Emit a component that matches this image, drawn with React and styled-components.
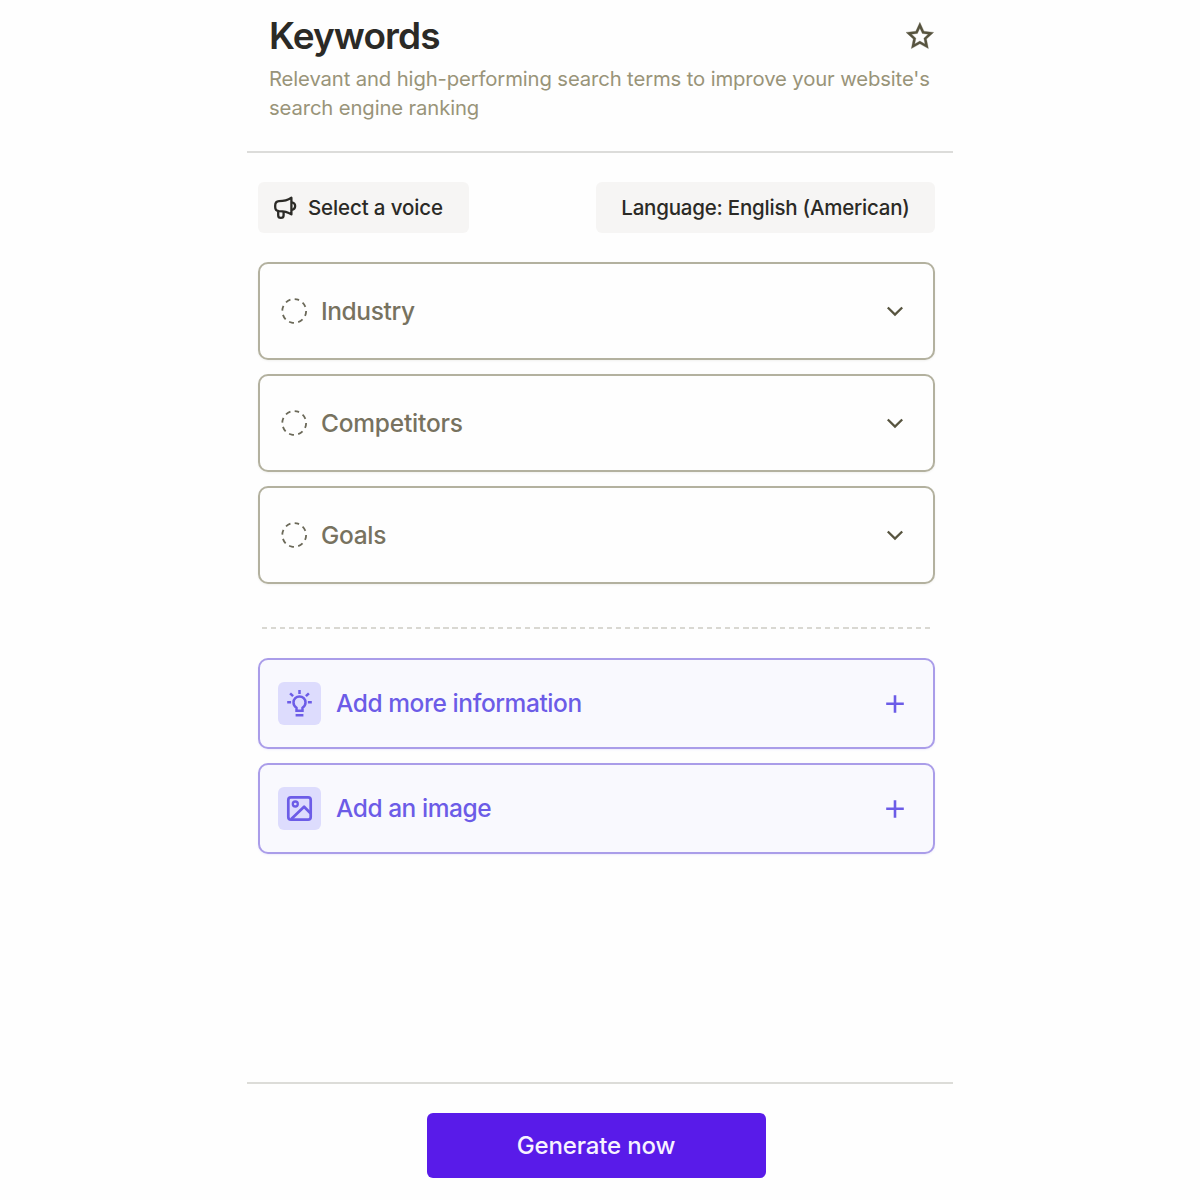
import React from "react";
import styled, { createGlobalStyle } from "styled-components";

const GlobalStyle = createGlobalStyle`
  *, *::before, *::after { box-sizing: border-box; }
  body { margin: 0; background: #fefefe; }
  button { font: inherit; border: 0; padding: 0; background: none; cursor: pointer; }
  svg { display: block; flex: none; }
`;

const Page = styled.div`
  height: 1200px;
  padding-left: 247px;
  font-family: Inter, "Liberation Sans", sans-serif;
`;

const Panel = styled.main`
  width: 706px;
  height: 100%;
  display: flex;
  flex-direction: column;
`;

const Header = styled.header`
  height: 153px;
  padding: 14px 19px 0 22px;
  border-bottom: 2px solid #dcdcda;
`;

const TitleRow = styled.div`
  display: flex;
  justify-content: space-between;
  align-items: center;
  height: 44px;
`;

const Title = styled.h1`
  margin: 0;
  font-size: 37px;
  line-height: 44px;
  font-weight: 600;
  letter-spacing: -0.9px;
  color: #2b2a26;
`;

const StarButton = styled.button`
  color: #57543f;
`;

const Description = styled.p`
  margin: 6px 0 0;
  font-size: 20.3px;
  line-height: 29px;
  letter-spacing: -0.13px;
  white-space: nowrap;
  color: #999479;
`;

const Body = styled.section`
  flex: 1;
  padding: 29px 18px 0 11px;
`;

const Toolbar = styled.div`
  display: flex;
  justify-content: space-between;
  margin-bottom: 29px;
`;

const OptionButton = styled.button`
  display: flex;
  align-items: center;
  justify-content: ${(p) => (p.$centered ? "center" : "flex-start")};
  gap: 9px;
  width: ${(p) => p.$width}px;
  height: 51px;
  padding-left: ${(p) => (p.$centered ? 0 : 15)}px;
  border-radius: 6px;
  background: #f6f5f4;
  color: #2b2a26;
  font-size: 20.5px;
  font-weight: 500;
  letter-spacing: ${(p) => p.$tracking}px;
  white-space: nowrap;
`;

const Stack = styled.div`
  display: flex;
  flex-direction: column;
  gap: ${(p) => p.$gap}px;
`;

const Card = styled.button`
  display: flex;
  align-items: center;
  width: 677px;
  border: 2px solid;
  border-radius: 10px;
  font-size: 24.5px;
  font-weight: 500;
`;

const FieldCard = styled(Card)`
  height: 98px;
  gap: 13px;
  padding: 0 26px 1px 20px;
  border-color: #b3b19f;
  background: #fefefe;
  color: #77725f;
  box-shadow: 0 1px 2px rgba(90, 86, 60, 0.08);
`;

const AddCard = styled(Card)`
  height: 91px;
  gap: 15px;
  padding: 0 26px 0 18px;
  border-color: #aa9de9;
  background: #f9f9fe;
  color: #6c5ce7;
  box-shadow: 0 1px 2px rgba(108, 92, 231, 0.1);
`;

const Label = styled.span`
  flex: 1;
  padding-bottom: ${(p) => p.$lift || 0}px;
  text-align: left;
  letter-spacing: ${(p) => p.$tracking}px;
  white-space: nowrap;
`;

const IconTile = styled.span`
  display: grid;
  place-items: center;
  width: 43px;
  height: 43px;
  border-radius: 6px;
  background: #dddcfd;
`;

const DashedRule = styled.div`
  height: 2px;
  margin: 43px 4px 29px 3px;
  background: repeating-linear-gradient(to right, transparent 0 0.5px, #d9d8d2 0.5px 5.8px, transparent 5.8px 9.09px);
`;

const Footer = styled.footer`
  display: flex;
  justify-content: center;
  height: 118px;
  padding: 29px 8px 0 0;
  border-top: 2px solid #dcdcd8;
`;

const GenerateButton = styled.button`
  width: 339px;
  height: 65px;
  border-radius: 6px;
  background: #591be9;
  color: #f7f2ff;
  font-size: 24px;
  font-weight: 500;
  letter-spacing: -0.13px;
`;

const StarIcon = () => (
  <svg width="29" height="29" viewBox="-0.3 0.2 24 24" fill="currentColor" stroke="currentColor" strokeWidth="0.25">
    <path d="M12 18.26 4.95 22.21 6.52 14.28.59 8.79 8.61 7.84 12 .5l3.39 7.34 8.02.95-5.93 5.49 1.57 7.93L12 18.26Zm0-2.29 4.25 2.38-.95-4.78 3.57-3.3-4.83-.58L12 5.28 9.96 9.69l-4.83.58 3.57 3.3-.95 4.78L12 15.97Z" />
  </svg>
);

const MegaphoneIcon = () => (
  <svg width="26" height="26" viewBox="0 0 26 26" fill="none" stroke="currentColor" strokeWidth="2.3" strokeLinejoin="round">
    <path d="M6 6.2c5.2 0 8.6-.9 12.4-3.4v16.6C14.600 17 11.200 16.200 6 16.200a4.200 4.200 0 0 1-3.800-4.200v-1.600A4.200 4.200 0 0 1 6 6.200Z" />
    <path d="M5.200 16v4.200a2.700 2.700 0 0 0 5.400 0v-4" />
    <path d="M18.400 7.300c5 .5 5 7.100 0 7.600" />
  </svg>
);

const DashedCircleIcon = () => (
  <svg width="28" height="28" viewBox="0 0 28 28" fill="none" stroke="#6b6959" strokeWidth="1.8">
    <circle cx="14.2" cy="14" r="11.9" strokeDasharray="5.1 4.246" strokeDashoffset="2.55" transform="rotate(-78 14.2 14)" />
  </svg>
);

const ChevronIcon = () => (
  <svg width="24" height="24" viewBox="0 0 24 24" fill="none" stroke="#57543f" strokeWidth="2.3">
    <path d="m4.800 8.500 7.200 7.100 7.200-7.100" />
  </svg>
);

const PlusIcon = () => (
  <svg width="24" height="24" viewBox="0 0 24 24" fill="none" stroke="currentColor" strokeWidth="2.6">
    <path d="M12 3.200v17.600M3.200 11.700h17.600" />
  </svg>
);

const BulbIcon = () => (
  <svg width="29" height="29" viewBox="-0.5 -0.5 29 29" fill="none" stroke="currentColor" strokeWidth="2.5">
    <path d="M11 21.300v-3c-1.900-1.300-3-3.200-3-5.400a6 6 0 0 1 12 0c0 2.200-1.100 4.100-3 5.400v3Z" />
    <path d="M10.100 25.700h7.800M14 .5v3.900M1.700 12.800h3.900M22.400 12.800h3.900M4.600 3.800l3 2.900M23.400 3.800l-3 2.900" />
  </svg>
);

const ImageIcon = () => (
  <svg width="29" height="29" viewBox="-0.500 -0.500 29 29" fill="none" stroke="currentColor" strokeWidth="2.700" strokeLinejoin="round">
    <rect x="2.800" y="2.800" width="22.400" height="22.400" rx="2.600" />
    <circle cx="9.800" cy="9.500" r="2.500" strokeWidth="2.300" />
    <path d="m5.800 24.500 12.800-12.300 6.400 6.600" />
  </svg>
);

const fields = [
  { label: "Industry", tracking: -0.4 },
  { label: "Competitors", tracking: -0.22 },
  { label: "Goals", tracking: -0.3 },
];

const additions = [
  { label: "Add more information", tracking: -0.43, Icon: BulbIcon },
  { label: "Add an image", tracking: -0.46, Icon: ImageIcon },
];

export default function App() {
  return (
    <Page>
      <GlobalStyle />
      <Panel>
        <Header>
          <TitleRow>
            <Title>Keywords</Title>
            <StarButton aria-label="Favorite"><StarIcon /></StarButton>
          </TitleRow>
          <Description>
            Relevant and high-performing search terms to improve your website's
            <br />
            search engine ranking
          </Description>
        </Header>
        <Body>
          <Toolbar>
            <OptionButton $width={211} $tracking={-0.13}><MegaphoneIcon />Select a voice</OptionButton>
            <OptionButton $width={339} $tracking={-0.22} $centered>Language: English (American)</OptionButton>
          </Toolbar>
          <Stack $gap={14.2}>
            {fields.map(({ label, tracking }) => (
              <FieldCard key={label}>
                <DashedCircleIcon />
                <Label $tracking={tracking}>{label}</Label>
                <ChevronIcon />
              </FieldCard>
            ))}
          </Stack>
          <DashedRule />
          <Stack $gap={14}>
            {additions.map(({ label, tracking, Icon }) => (
              <AddCard key={label}>
                <IconTile><Icon /></IconTile>
                <Label $tracking={tracking} $lift={2}>{label}</Label>
                <PlusIcon />
              </AddCard>
            ))}
          </Stack>
        </Body>
        <Footer>
          <GenerateButton>Generate now</GenerateButton>
        </Footer>
      </Panel>
    </Page>
  );
}
